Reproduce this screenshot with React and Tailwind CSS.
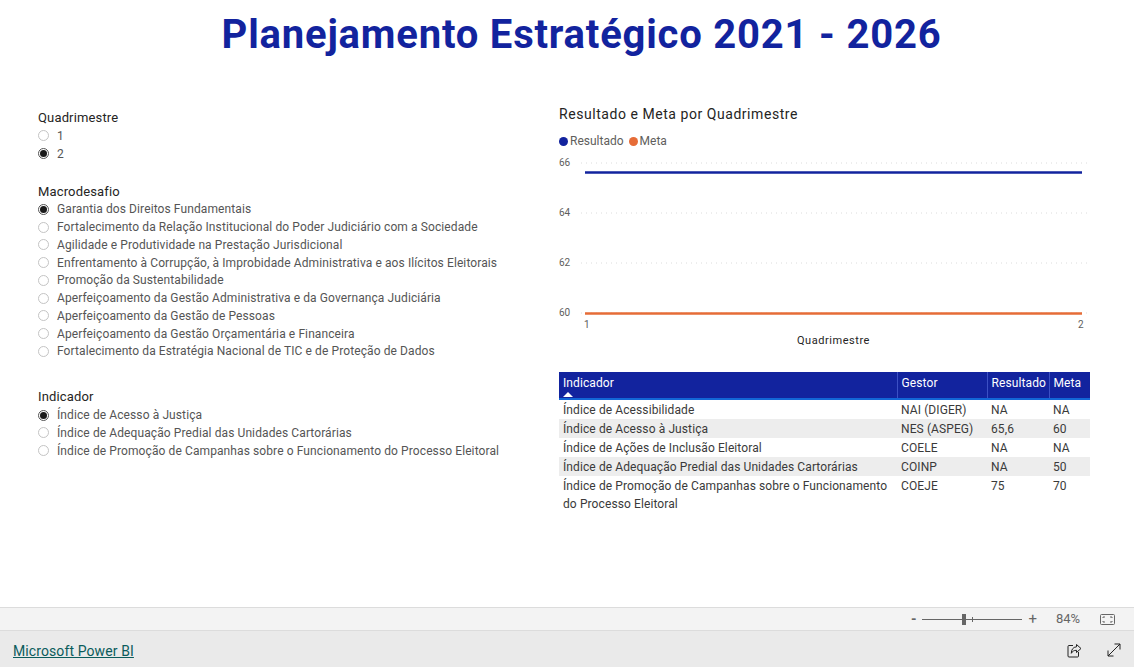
import React from "react";

const macrodesafios = [
  "Garantia dos Direitos Fundamentais",
  "Fortalecimento da Relação Institucional do Poder Judiciário com a Sociedade",
  "Agilidade e Produtividade na Prestação Jurisdicional",
  "Enfrentamento à Corrupção, à Improbidade Administrativa e aos Ilícitos Eleitorais",
  "Promoção da Sustentabilidade",
  "Aperfeiçoamento da Gestão Administrativa e da Governança Judiciária",
  "Aperfeiçoamento da Gestão de Pessoas",
  "Aperfeiçoamento da Gestão Orçamentária e Financeira",
  "Fortalecimento da Estratégia Nacional de TIC e de Proteção de Dados",
];

const indicadores = [
  "Índice de Acesso à Justiça",
  "Índice de Adequação Predial das Unidades Cartorárias",
  "Índice de Promoção de Campanhas sobre o Funcionamento do Processo Eleitoral",
];

const rows = [
  ["Índice de Acessibilidade", "NAI (DIGER)", "NA", "NA"],
  ["Índice de Acesso à Justiça", "NES (ASPEG)", "65,6", "60"],
  ["Índice de Ações de Inclusão Eleitoral", "COELE", "NA", "NA"],
  ["Índice de Adequação Predial das Unidades Cartorárias", "COINP", "NA", "50"],
  ["Índice de Promoção de Campanhas sobre o Funcionamento do Processo Eleitoral", "COEJE", "75", "70"],
];

const Radio = ({ label, checked }) => (
  <div className="flex h-[17.75px] items-center">
    <span className={`flex h-[11px] w-[11px] items-center justify-center rounded-full border bg-white ${checked ? "border-[#555]" : "border-[#c4c4c4]"}`}>
      {checked && <span className="h-[7px] w-[7px] rounded-full bg-[#1a1a1a]" />}
    </span>
    <span className="ml-2 whitespace-nowrap text-[12px] tracking-[0.1px] text-[#555]">{label}</span>
  </div>
);

const Slicer = ({ title, items, selected, className }) => (
  <div className={className}>
    <div className="mb-px h-[18px] text-[13px] leading-[20px] tracking-[0.15px] text-[#252423]">{title}</div>
    {items.map((item) => (
      <Radio key={item} label={item} checked={item === selected} />
    ))}
  </div>
);

const Chart = () => (
  <div className="relative mt-[5px] h-[217px] w-[531px]">
    <svg width="531" height="175" className="block" style={{ fontFamily: "Roboto, sans-serif" }}>
      {[8, 58, 108, 158].map((y, i) => (
        <g key={y}>
          <line x1="22" x2="531" y1={y} y2={y} stroke="#dcdcdc" strokeDasharray="1 4" />
          <text x="0" y={y + 3} fontSize="10" fill="#605e5c">{66 - i * 2}</text>
        </g>
      ))}
      <line x1="26" x2="523" y1="17.500" y2="17.500" stroke="#12239e" strokeWidth="2.500" />
      <line x1="26" x2="523" y1="158.500" y2="158.500" stroke="#e66c37" strokeWidth="2.500" />
      <text x="25" y="173" fontSize="10" fill="#605e5c">1</text>
      <text x="519" y="173" fontSize="10" fill="#605e5c">2</text>
    </svg>
    <div className="absolute left-[18px] right-0 top-[178px] text-center text-[11px] leading-[15px] tracking-[0.55px] text-[#252423]">Quadrimestre</div>
  </div>
);

const Table = () => (
  <table className="w-[531px] table-fixed border-collapse text-[12px] tracking-[0.1px] text-[#3a3a3a]">
    <colgroup>
      <col className="w-[338px]" />
      <col className="w-[90px]" />
      <col className="w-[62px]" />
      <col className="w-[41px]" />
    </colgroup>
    <thead>
      <tr className="h-[27px] border-b-2 border-[#1266d6] bg-[#12239e] text-left font-normal text-white">
        <th className="relative px-1 pb-[4px] font-normal">
          Indicador
          <span className="absolute bottom-[1px] left-[4px] h-0 w-0 border-x-[5px] border-b-[5px] border-x-transparent border-b-white" />
        </th>
        <th className="border-l border-[#3c50c4] px-1 pb-[4px] font-normal">Gestor</th>
        <th className="border-l border-[#3c50c4] px-1 pb-[4px] font-normal">Resultado</th>
        <th className="border-l border-[#3c50c4] px-1 pb-[4px] font-normal">Meta</th>
      </tr>
    </thead>
    <tbody>
      {rows.map((row, i) => (
        <tr key={row[0]} className={i % 2 === 1 ? "bg-[#ededed]" : "bg-white"}>
          {row.map((cell) => (
            <td key={cell} className="h-[19px] px-1 pt-px align-top leading-[18px]">{cell}</td>
          ))}
        </tr>
      ))}
    </tbody>
  </table>
);

export default function App() {
  return (
    <div className="flex h-[667px] w-[1134px] flex-col overflow-hidden bg-white font-['Roboto',sans-serif]">
      <main className="flex-1">
        <h1 className="pl-[29px] pt-[9px] text-center text-[40px] font-bold leading-[52px] tracking-[0.8px] text-[#12239e]">Planejamento Estratégico 2021 - 2026</h1>
        <div className="flex pl-[38px] pt-[43px]">
          <div className="w-[521px] pt-[4px]">
            <Slicer title="Quadrimestre" items={["1", "2"]} selected="2" />
            <Slicer className="mt-[19px]" title="Macrodesafio" items={macrodesafios} selected={macrodesafios[0]} />
            <Slicer className="mt-[27px]" title="Indicador" items={indicadores} selected={indicadores[0]} />
          </div>
          <div className="w-[531px]">
            <div className="text-[14px] leading-[20px] tracking-[0.55px] text-[#252423]">Resultado e Meta por Quadrimestre</div>
            <div className="mt-[8px] flex h-[18px] items-center text-[12px] text-[#605e5c]">
              <span className="mr-[2px] h-[9px] w-[9px] rounded-full bg-[#12239e]" />
              Resultado
              <span className="ml-[5px] mr-[2px] h-[9px] w-[9px] rounded-full bg-[#e66c37]" />
              Meta
            </div>
            <Chart />
            <Table />
          </div>
        </div>
      </main>

      <div className="flex h-[24px] items-center justify-end border-y border-[#dcdcdc] bg-[#f3f3f3] text-[#666]">
        <span className="text-[14px] font-bold leading-none">-</span>
        <div className="relative mx-[6px] h-px w-[100px] bg-[#666]">
          <span className="absolute left-[40px] top-[-5px] h-[11px] w-[4px] bg-[#666]" />
          <span className="absolute left-[50px] top-[-2px] h-[5px] w-px bg-[#666]" />
        </div>
        <span className="text-[15px] leading-none">+</span>
        <span className="ml-[19px] w-[27px] text-[13px]">84%</span>
        <svg className="ml-[17px] mr-[19px]" width="15" height="11" viewBox="0 0 15 11" fill="none" stroke="#666">
          <rect x="0.5" y="0.5" width="14" height="10" rx="1" />
          <path d="M3 4V3h2M10 3h2v1M12 7v1h-2M5 8H3V7" />
        </svg>
      </div>

      <footer className="flex h-[36px] items-center justify-between bg-[#eaeaea] px-[13px] pt-[2px]">
        <a href="#" className="pt-[3px] text-[14px] tracking-[0.1px] text-[#0b5c5c] underline">Microsoft Power BI</a>
        <div className="flex items-center gap-[25px]">
          <svg width="15" height="15" viewBox="0 0 15 15" fill="none" stroke="#222" strokeWidth="1">
            <path d="M6 2.5H2a1 1 0 0 0-1 1V13a1 1 0 0 0 1 1h8.500a1 1 0 0 0 1-1V9" />
            <path d="M9.500 1.500L14 5.500L9.500 9.500V7.300C7 7.300 5.300 8.300 4.300 10.300C4.300 6.800 6 4 9.500 3.800Z" />
          </svg>
          <svg width="14" height="14" viewBox="0 0 14 14" fill="none" stroke="#222" strokeWidth="1">
            <path d="M1 13L13 1M7.500 1H13V6.500M1 7.500V13H6.500" />
          </svg>
        </div>
      </footer>
    </div>
  );
}
